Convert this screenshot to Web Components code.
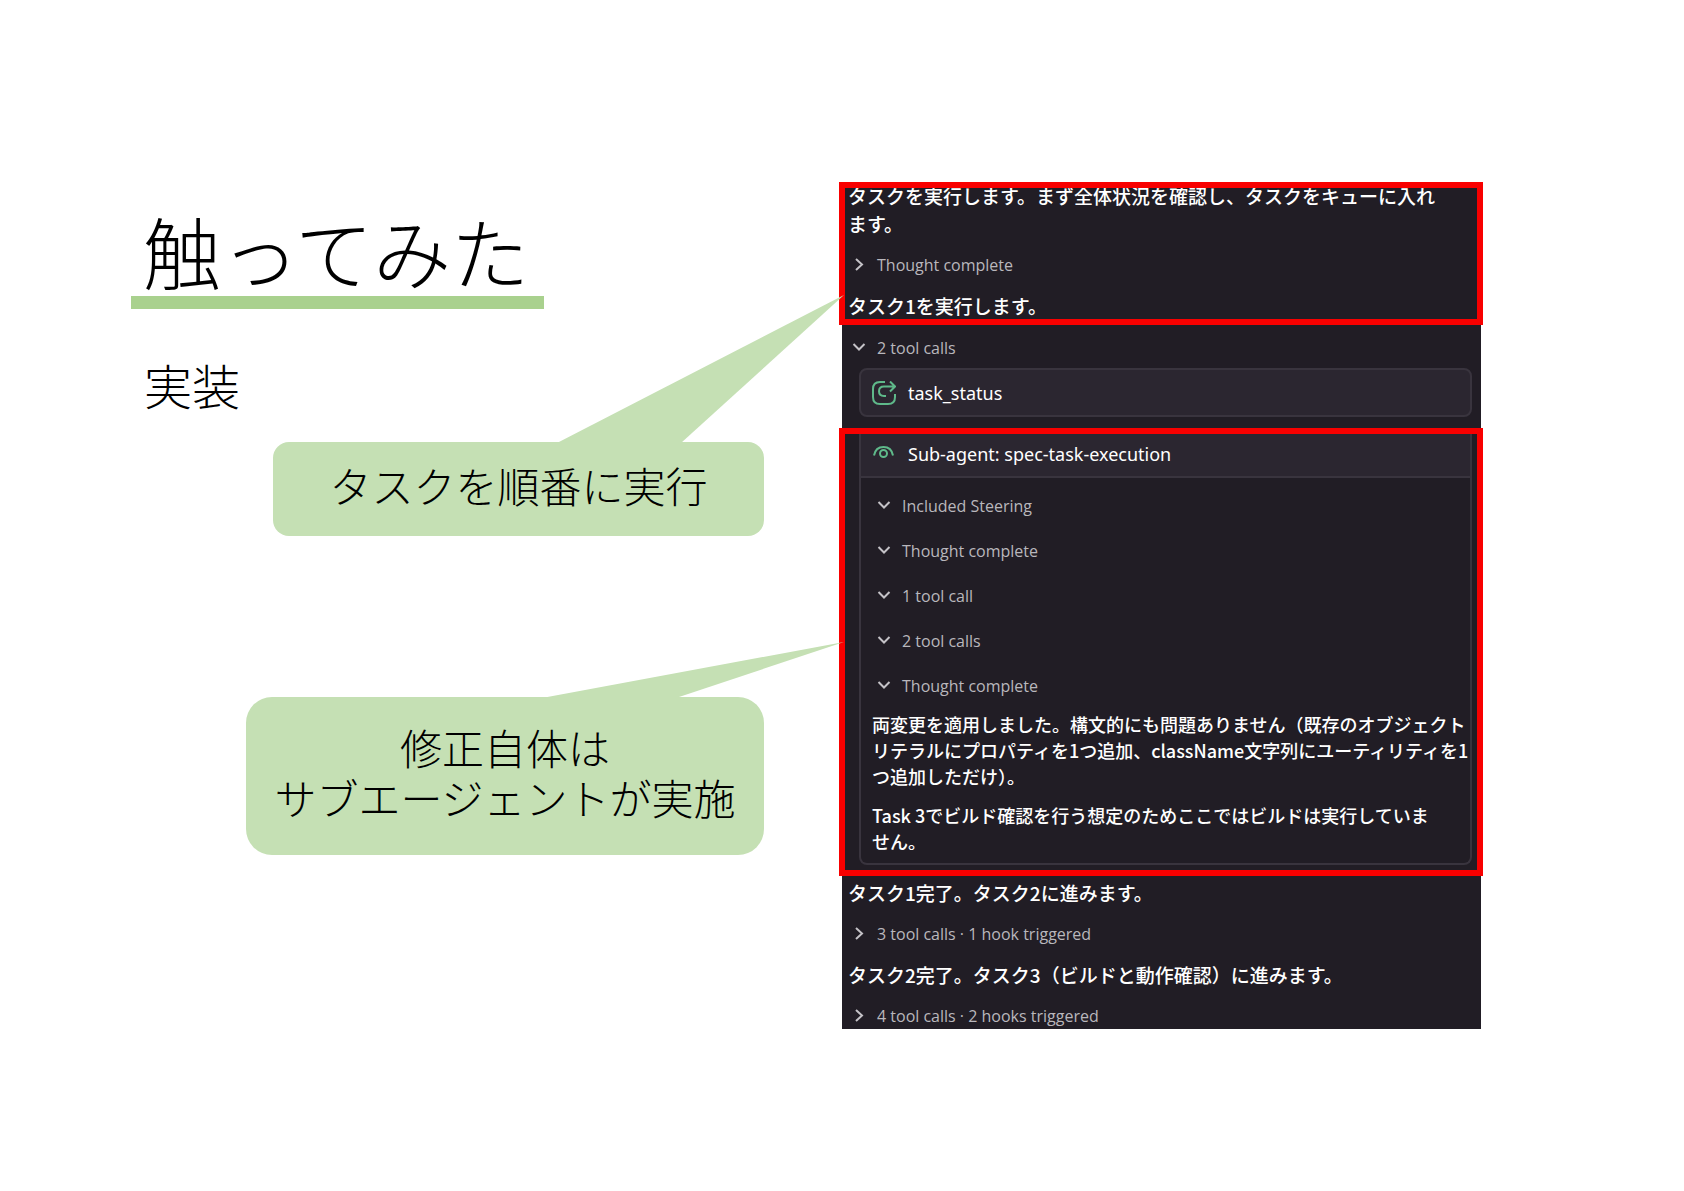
<!DOCTYPE html>
<html lang="ja">
<head>
<meta charset="utf-8">
<title>触ってみた</title>
<style>
body { margin: 0; background: #fff; color: #000; font-family: "Noto Sans CJK JP", sans-serif; }
</style>
</head>
<body>
<slide-page>
  <slide-heading slot="left">触ってみた<span slot="sub">実装</span></slide-heading>
  <call-out slot="left" class="first" tail="far">タスクを順番に実行</call-out>
  <call-out slot="left" class="second" tail="near">修正自体は<br>サブエージェントが実施</call-out>
  <agent-log slot="right">
    <highlight-frame>
      <log-text>タスクを実行します。まず全体状況を確認し、タスクをキューに入れ<br>ます。</log-text>
      <log-toggle>Thought complete</log-toggle>
      <log-text>タスク1を実行します。</log-text>
    </highlight-frame>
    <tool-group>
      <log-toggle open>2 tool calls</log-toggle>
      <tool-card>task_status</tool-card>
    </tool-group>
    <highlight-frame flush>
      <sub-agent>
        <span slot="title">Sub-agent: spec-task-execution</span>
        <log-toggle open>Included Steering</log-toggle>
        <log-toggle open>Thought complete</log-toggle>
        <log-toggle open>1 tool call</log-toggle>
        <log-toggle open>2 tool calls</log-toggle>
        <log-toggle open>Thought complete</log-toggle>
        <log-text small slot="result">両変更を適用しました。構文的にも問題ありません（既存のオブジェクト<br>リテラルにプロパティを1つ追加、className文字列にユーティリティを1<br>つ追加しただけ）。</log-text>
        <log-text small slot="result">Task 3でビルド確認を行う想定のためここではビルドは実行していま<br>せん。</log-text>
      </sub-agent>
    </highlight-frame>
    <log-section>
      <log-text>タスク1完了。タスク2に進みます。</log-text>
      <log-toggle>3 tool calls · 1 hook triggered</log-toggle>
      <log-text>タスク2完了。タスク3（ビルドと動作確認）に進みます。</log-text>
      <log-toggle>4 tool calls · 2 hooks triggered</log-toggle>
    </log-section>
  </agent-log>
</slide-page>

<script>
function define(name, html) {
  const template = document.createElement('template');
  template.innerHTML = html;
  customElements.define(name, class extends HTMLElement {
    constructor() {
      super();
      this.attachShadow({ mode: 'open' }).append(template.content.cloneNode(true));
    }
  });
}

define('slide-page', `
<style>
  :host { display: block; box-sizing: border-box; min-height: 100vh; padding: 182px 203px 0 131px; }
  main { display: grid; grid-template-columns: minmax(0, 633fr) minmax(0, 639fr); column-gap: 78px; align-items: start; }
  .left { display: flex; flex-direction: column; padding-top: 28px; }
  ::slotted(.first) { margin: 28px 0 0 142px; }
  ::slotted(.second) { margin: 161px 0 0 115px; }
</style>
<main>
  <div class="left"><slot name="left"></slot></div>
  <slot name="right"></slot>
</main>`);

define('slide-heading', `
<style>
  :host { display: flex; flex-direction: column; align-items: flex-start; gap: 45px; font-weight: 300; }
  h1, h2 { margin: 0; font-weight: inherit; white-space: nowrap; }
  h1 { padding: 0 15px 6px 12px; font-size: 78px; line-height: 80px; border-bottom: 13px solid #a9d18e; }
  h2 { padding-left: 13px; font-size: 48px; line-height: 60px; }
</style>
<h1><slot></slot></h1>
<h2><slot name="sub"></slot></h2>`);

define('call-out', `
<style>
  :host { display: flex; justify-content: center; align-items: center; position: relative; z-index: 1; background: #c5e0b4;
    font-size: 42px; line-height: 50px; font-weight: 300; text-align: center; white-space: nowrap; }
  :host([tail="far"]) { border-radius: 16px; padding: 18px 0 26px; }
  :host([tail="near"]) { border-radius: 26px; padding: 25px 0 33px; }
  svg { display: none; position: absolute; bottom: calc(100% - 1px); right: -80px; fill: #c5e0b4; }
  :host([tail="far"]) .far, :host([tail="near"]) .near { display: block; }
</style>
<div><slot></slot></div>
<svg class="far" width="287" height="148" viewBox="0 0 287 148"><path d="M0 148 287 0 124 148z"/></svg>
<svg class="near" width="302" height="56" viewBox="0 0 302 56"><path d="M0 56 302 0 134 56z"/></svg>`);

define('agent-log', `
<style>
  :host { display: flex; flex-direction: column; background: #211d25; color: #fff; font-family: "Noto Sans", "Noto Sans CJK JP", sans-serif; }
</style>
<slot></slot>`);

define('highlight-frame', `
<style>
  :host { display: flex; flex-direction: column; gap: 14px; position: relative; padding: 0 6px 5px; }
  :host([flush]) { padding: 0 9px 11px 17px; }
  :host::after { content: ""; position: absolute; inset: 0 -2px 0 -3px; border: 6px solid #f80000; pointer-events: none; }
</style>
<slot></slot>`);

define('log-section', `
<style>:host { display: flex; flex-direction: column; gap: 14px; padding: 3px 6px 0; }</style>
<slot></slot>`);

define('tool-group', `
<style>
  :host { display: flex; flex-direction: column; gap: 7px; padding: 10px 9px 11px 6px; }
  ::slotted(tool-card) { margin-left: 11px; }
</style>
<slot></slot>`);

define('log-text', `
<style>
  :host { display: block; }
  p { margin: 0; font-family: "Noto Sans CJK JP", sans-serif; font-size: 19px; line-height: 28px; font-weight: 500; white-space: nowrap; }
  :host([small]) p { font-size: 18px; line-height: 26px; }
</style>
<p><slot></slot></p>`);

define('log-toggle', `
<style>
  :host { display: flex; }
  button { display: flex; align-items: center; gap: 8px; height: 26px; padding: 0 0 0 1px; border: 0; background: none; color: #b9b7bc;
    font-family: "Open Sans", "Noto Sans", sans-serif; font-size: 16px; line-height: 26px; white-space: nowrap; }
  svg { fill: none; stroke: #c4c2c7; stroke-width: 2; }
  .down { display: none; }
  :host([open]) .down { display: block; }
  :host([open]) .right { display: none; }
</style>
<button type="button">
  <svg class="right" width="20" height="20" viewBox="0 0 20 20"><path d="M7 4 13 9.500 7 15"/></svg>
  <svg class="down" width="20" height="20" viewBox="0 0 20 20"><path d="M4.500 6 10 11.500 15.500 6"/></svg>
  <span><slot></slot></span>
</button>`);

define('tool-card', `
<style>
  :host { display: flex; align-items: center; gap: 12px; box-sizing: border-box; height: 49px; padding: 1px 11px 0;
    border: 2px solid #39343e; border-radius: 8px; background: #2b2630; font-size: 18px; line-height: 26px; }
  svg { fill: none; stroke: #5fb98a; stroke-width: 2; }
</style>
<svg width="24" height="24" viewBox="0 0 24 24"><path d="M13 1H8Q1 1 1 8v8q0 7 7 7h8q7 0 7-7v-3M23 5.500H12q-5 0-5 4.700t5 4.700h2M18 .500l5 5-5 5"/></svg>
<span><slot></slot></span>`);

define('sub-agent', `
<style>
  :host { display: block; border: 2px solid #39343e; border-top: 0; border-radius: 0 0 8px 8px; }
  header { display: flex; align-items: center; gap: 12px; box-sizing: border-box; height: 50px; padding: 3px 11px 0; background: #2b2630;
    border-bottom: 2px solid #39343e; font-size: 18px; line-height: 26px; }
  svg { fill: none; stroke: #5fb98a; stroke-width: 2; }
  .steps { display: flex; flex-direction: column; gap: 19px; padding: 15px 12px 12px; }
  .result { display: flex; flex-direction: column; gap: 13px; padding: 0 11px 9px; }
</style>
<header>
  <svg width="24" height="24" viewBox="0 0 24 24"><path d="M2 13.500Q3.500 5 11.500 5T21 13.500"/><circle cx="11.500" cy="11.500" r="3.500"/></svg>
  <span><slot name="title"></slot></span>
</header>
<div class="steps"><slot></slot></div>
<div class="result"><slot name="result"></slot></div>`);
</script>
</body>
</html>
